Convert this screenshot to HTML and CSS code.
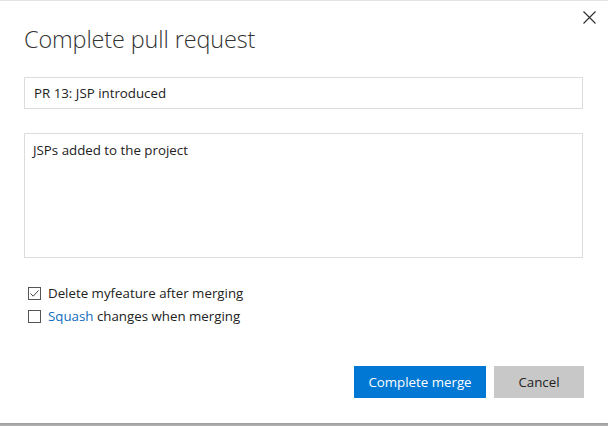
FILE: index.html
```html
<!DOCTYPE html>
<html>
<head>
<meta charset="utf-8">
<link rel="stylesheet" href="styles.css">
</head>
<body>
<div class="dialog">
  <button class="close" aria-label="Close">
    <svg width="13" height="13" viewBox="0 0 13 13"><path d="M0.5 0.5L12.5 12.5M12.5 0.5L0.5 12.5" stroke="#333" stroke-width="1.2" fill="none"/></svg>
  </button>
  <h1 class="title">Complete pull request</h1>
  <div class="field">PR 13: JSP introduced</div>
  <div class="area">JSPs added to the project</div>
  <div class="options">
    <label class="opt"><span class="box checked"><svg width="11" height="11" viewBox="0 0 11 11"><path d="M1.5 5.5L4.2 8.2L9.5 2.5" stroke="#444" stroke-width="1" fill="none"/></svg></span>Delete myfeature after merging</label>
    <label class="opt"><span class="box"></span><span class="link">Squash</span>&nbsp;changes when merging</label>
  </div>
  <div class="footer">
    <button class="btn primary">Complete merge</button>
    <button class="btn secondary">Cancel</button>
  </div>
</div>
<div class="shelf"></div>
</body>
</html>
```
FILE: styles.css
```css
html, body {
  margin: 0;
  padding: 0;
  background: #fff;
}
body {
  width: 608px;
  height: 426px;
  overflow: hidden;
  font-family: "Open Sans", "Noto Sans", sans-serif;
  color: #222;
  display: flex;
  flex-direction: column;
}
.dialog {
  position: relative;
  flex: 1;
  border-top: 1px solid #e3e3e3;
  padding: 0 25px 0 24px;
  display: flex;
  flex-direction: column;
}
.close {
  position: absolute;
  top: 10px;
  right: 12px;
  width: 13px;
  height: 13px;
  padding: 0;
  border: 0;
  background: none;
  display: flex;
}
.title {
  margin: 22px 0 0 0;
  font-weight: 300;
  font-size: 23.4px;
  line-height: 32px;
  color: #333;
  letter-spacing: -0.1px;
}
.field {
  margin-top: 22px;
  height: 30px;
  border: 1px solid #dcdcdc;
  padding: 0 9px;
  font-size: 13.3px;
  line-height: 31px;
  color: #222;
}
.area {
  margin-top: 24px;
  height: 111px;
  border: 1px solid #dcdcdc;
  padding: 6px 8px;
  font-size: 13.3px;
  line-height: 20px;
  color: #222;
}
.options {
  margin-top: 26px;
  padding-left: 4px;
  display: flex;
  flex-direction: column;
  gap: 5px;
}
.opt {
  display: flex;
  align-items: center;
  font-size: 13.3px;
  line-height: 18px;
  color: #222;
}
.box {
  width: 11px;
  height: 11px;
  border: 1px solid #555;
  margin-right: 7px;
  display: flex;
  align-items: center;
  justify-content: center;
}
.link {
  color: #106ebe;
}
.footer {
  margin-top: 41px;
  margin-right: -1px;
  display: flex;
  justify-content: flex-end;
  gap: 8px;
}
.btn {
  height: 32px;
  border: 0;
  font-family: "Open Sans", "Noto Sans", sans-serif;
  font-size: 13.3px;
  padding: 0;
}
.primary {
  width: 132px;
  background: #0078d4;
  color: #fff;
}
.secondary {
  width: 90px;
  background: #c8c8c8;
  color: #222;
}
.shelf {
  height: 3px;
  background: linear-gradient(#9c9c9c, #b4b4b4);
}
```
